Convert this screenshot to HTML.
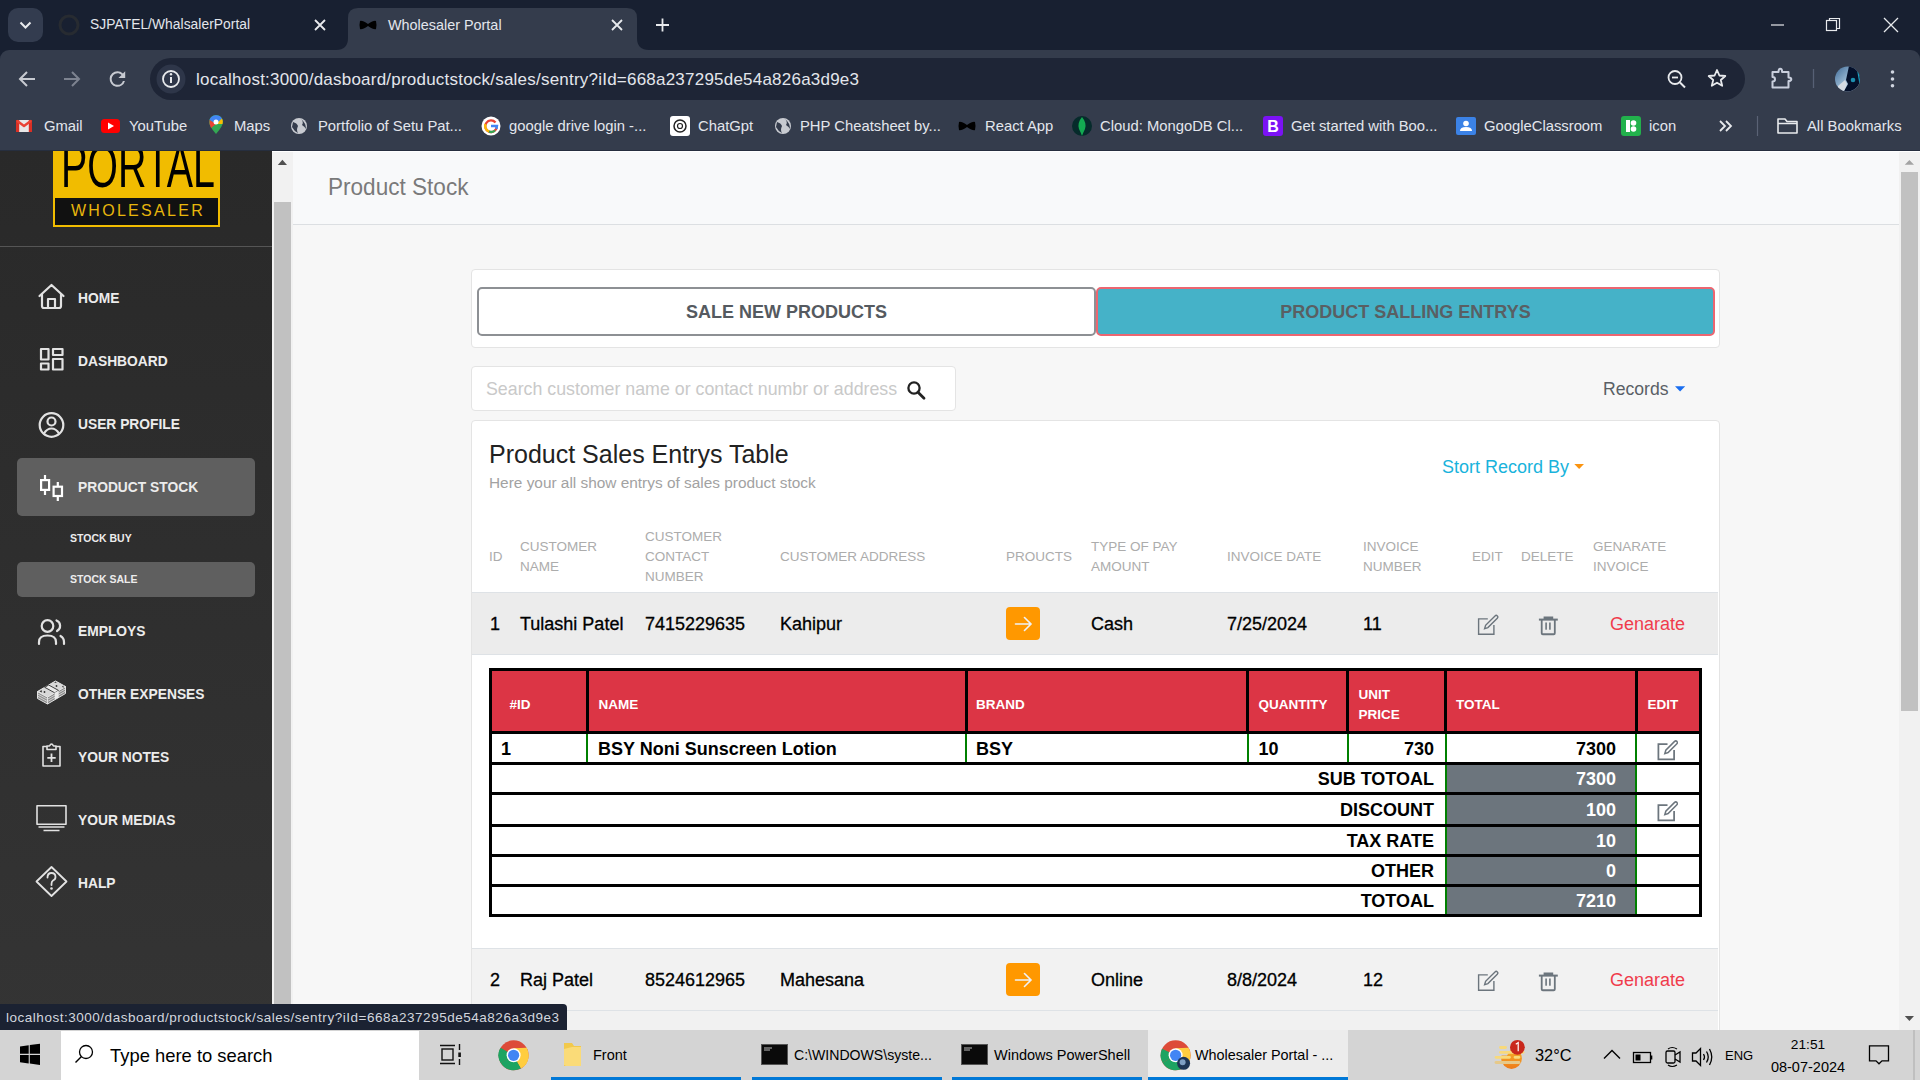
<!DOCTYPE html>
<html><head><meta charset="utf-8">
<style>
*{box-sizing:border-box;margin:0;padding:0}
html,body{width:1920px;height:1080px;overflow:hidden;font-family:"Liberation Sans",sans-serif;background:#f7f7f7}
.abs{position:absolute}
#tabs{position:absolute;left:0;top:0;width:1920px;height:50px;background:#182031}
#toolbar{position:absolute;left:0;top:50px;width:1920px;height:100px;background:#343c4c;border-top-left-radius:9px;border-top-right-radius:9px}
#tabs2{position:absolute;left:0;top:50px;width:1920px;height:12px;background:#182031}
#page{position:absolute;left:0;top:150px;width:1920px;height:880px;background:#f7f7f7;overflow:hidden}
#taskbar{position:absolute;left:0;top:1030px;width:1920px;height:50px;background:#d4d4d4}
.ct{color:#e3e6ec;font-size:15px;white-space:nowrap}
.bm{position:absolute;top:117px;color:#e3e6ec;font-size:14.8px;white-space:nowrap;line-height:18px}
#sidebar{position:absolute;left:0;top:0;width:272px;height:880px;background:linear-gradient(#292929,#343434)}
.nav{position:absolute;margin-top:1px;left:78px;color:#ececec;font-weight:bold;font-size:13.8px;white-space:nowrap;line-height:16px}
.sub{position:absolute;margin-top:1px;left:70px;color:#ececec;font-weight:bold;font-size:10.5px;white-space:nowrap;line-height:13px}
.ico{position:absolute}
.th{position:absolute;color:#acacac;font-size:13.5px;line-height:20px;white-space:nowrap}
.tk{position:absolute;top:15px;color:#000;font-size:16px;line-height:20px;white-space:nowrap}
.td{position:absolute;color:#000;font-size:18px;line-height:20px;white-space:nowrap;-webkit-text-stroke:0.3px #000}
</style></head><body>

<div id="tabs">
  <svg class="abs" style="left:0;top:0" width="1920" height="50">
    <rect x="8" y="8" width="35" height="34" rx="10" fill="#333c4f"/>
    <path d="M20.5 22.5 L25.5 27.5 L30.5 22.5" stroke="#e8eaed" stroke-width="2" fill="none"/>
    <!-- github icon faint -->
    <circle cx="69" cy="25" r="9" fill="none" stroke="#272b31" stroke-width="3"/>
    <!-- active tab shape -->
    <path d="M336 50 Q348 50 348 38 L348 18 Q348 8 358 8 L627 8 Q637 8 637 18 L637 38 Q637 50 649 50 Z" fill="#343c4c"/>
    <!-- close x tab1 -->
    <path d="M315 20 L325 30 M325 20 L315 30" stroke="#e8eaed" stroke-width="1.8"/>
    <!-- close x tab2 -->
    <path d="M612 20 L622 30 M622 20 L612 30" stroke="#e8eaed" stroke-width="1.8"/>
    <!-- plus -->
    <path d="M662.5 18.5 L662.5 31.5 M656 25 L669 25" stroke="#e8eaed" stroke-width="1.8"/>
    <!-- bow tie -->
    <path d="M360 21 Q362 20 368 24 Q374 20 376 21 Q377 25 376 29 Q374 30 368 26 Q362 30 360 29 Q359 25 360 21 Z" fill="#000"/>
    <!-- window controls -->
    <path d="M1771 25 L1784 25" stroke="#e8eaed" stroke-width="1.2"/>
    <rect x="1826.5" y="20.5" width="10" height="10" fill="none" stroke="#e8eaed" stroke-width="1.2"/>
    <path d="M1829.5 20.5 L1829.5 18.5 L1839.5 18.5 L1839.5 28.5 L1836.5 28.5" fill="none" stroke="#e8eaed" stroke-width="1.2"/>
    <path d="M1884 18 L1898 32 M1898 18 L1884 32" stroke="#e8eaed" stroke-width="1.3"/>
  </svg>
  <div class="abs ct" style="left:90px;top:16px;line-height:18px;font-size:13.8px;letter-spacing:0.05px">SJPATEL/WhalsalerPortal</div>
  <div class="abs ct" style="left:388px;top:16px;line-height:18px;font-size:14.4px">Wholesaler Portal</div>
</div>
<div id="tabs2"></div>
<div id="toolbar">
  <svg class="abs" style="left:0;top:0" width="1920" height="100">
    <!-- back -->
    <path d="M35 29 L20 29 M27 22 L20 29 L27 36" stroke="#c7cad1" stroke-width="2" fill="none"/>
    <!-- fwd -->
    <path d="M64 29 L79 29 M72 22 L79 29 L72 36" stroke="#7d8390" stroke-width="2" fill="none"/>
    <!-- reload -->
    <path transform="translate(105.8,17.4) scale(0.97)" d="M17.65 6.35A7.958 7.958 0 0 0 12 4a8 8 0 1 0 7.73 10h-2.08A5.99 5.99 0 0 1 12 18a6 6 0 1 1 0-12c1.66 0 3.140.69 4.220 1.78L13 11h7V4l-2.35 2.35z" fill="#c7cad1"/>
    <!-- address bar -->
    <rect x="150" y="8" width="1595" height="42" rx="21" fill="#1e2536"/>
    <circle cx="171" cy="29" r="14.5" fill="#2e3649"/>
    <circle cx="171" cy="29" r="8" fill="none" stroke="#e8eaed" stroke-width="1.8"/>
    <path d="M171 27 L171 33" stroke="#e8eaed" stroke-width="2"/>
    <circle cx="171" cy="24.3" r="1.2" fill="#e8eaed"/>
    <!-- zoom -->
    <circle cx="1675" cy="27.5" r="6.5" fill="none" stroke="#e8eaed" stroke-width="1.8"/>
    <path d="M1672 27.5 L1678 27.5" stroke="#e8eaed" stroke-width="1.8"/>
    <path d="M1680 32.5 L1685 37.5" stroke="#e8eaed" stroke-width="2"/>
    <!-- star -->
    <path d="M1717 20 L1719.4 25.5 L1725.3 26 L1720.8 30 L1722.2 35.8 L1717 32.7 L1711.8 35.8 L1713.2 30 L1708.7 26 L1714.6 25.5 Z" fill="none" stroke="#e8eaed" stroke-width="1.8" stroke-linejoin="round"/>
    <!-- extensions puzzle -->
    <path d="M1772.5 22 L1778.5 22 Q1778.5 18.8 1780.3 18.8 Q1782.1 18.8 1782.1 22 L1788.5 22 L1788.5 27.5 Q1791.3 27.5 1791.3 29.3 Q1791.3 31.1 1788.5 31.1 L1788.5 37.5 L1772.5 37.5 L1772.5 31.5 Q1775 31.5 1775 29.3 Q1775 27.1 1772.5 27.1 Z" fill="none" stroke="#c9cfdd" stroke-width="2" stroke-linejoin="round"/>
    <path d="M1813.5 19 L1813.5 38" stroke="#566075" stroke-width="1.3"/>
    <!-- avatar -->
    <defs><clipPath id="avc"><circle cx="1847.5" cy="29" r="12.5"/></clipPath>
    <linearGradient id="avg" x1="0" y1="0" x2="1" y2="1"><stop offset="0" stop-color="#3e6a96"/><stop offset="0.6" stop-color="#a9c6de"/><stop offset="1" stop-color="#e0e6ee"/></linearGradient></defs>
    <g clip-path="url(#avc)">
      <rect x="1835" y="16" width="25" height="26" fill="url(#avg)"/>
      <path d="M1849 16 L1861 16 L1861 42 L1843.5 42 L1848 34 L1846 30 Z" fill="#04102a"/>
      <circle cx="1853" cy="30" r="2.3" fill="#1d8fb0"/>
      <path d="M1858 22 L1860 34" stroke="#1aa0c0" stroke-width="1.2"/>
      <path d="M1838 36 L1845 30 L1847 34 L1843.5 42 L1838 42 Z" fill="#d5dbe3"/>
    </g>
    <!-- menu dots -->
    <circle cx="1892.5" cy="22" r="1.8" fill="#d0d5e0"/>
    <circle cx="1892.5" cy="29" r="1.8" fill="#d0d5e0"/>
    <circle cx="1892.5" cy="35.8" r="1.8" fill="#d0d5e0"/>
    <!-- bookmarks icons -->
    <!-- gmail -->
    <rect x="16" y="70" width="16" height="12" rx="1" fill="#e8e8e8"/>
    <rect x="16" y="70" width="3.2" height="12" fill="#d93025"/>
    <rect x="28.8" y="70" width="3.2" height="12" fill="#d93025"/>
    <path d="M17 70.8 L24 76 L31 70.8" fill="none" stroke="#ea4335" stroke-width="2.4" stroke-linejoin="round"/>
    <!-- youtube -->
    <rect x="101" y="69" width="19" height="14" rx="3.5" fill="#ff0000"/>
    <path d="M108 72.5 L114 76 L108 79.5 Z" fill="#fff"/>
    <!-- maps -->
    <path d="M216 84 Q209 76 209 72 A7 7 0 0 1 223 72 Q223 76 216 84 Z" fill="#34a853"/>
    <path d="M209.5 70 A7 7 0 0 1 222 68.5 L216 74 Z" fill="#4285f4"/>
    <path d="M209.5 70 L216 74 L211 78 Q209 74 209.5 70Z" fill="#ea4335"/>
    <path d="M222 68.5 Q223.5 71 222.5 74 L216 74Z" fill="#fbbc04"/>
    <circle cx="216" cy="72" r="2.5" fill="#fff"/>
    <!-- globe portfolio -->
    <circle cx="299" cy="76" r="8" fill="#c8cbd1"/>
    <path d="M293 72 Q297 73 298 76 Q296 80 298 83 Q294 81 292 77Z M301 69 Q304 72 302 75 Q305 77 306 79 Q306 73 301 69Z" fill="#343c4c"/>
    <!-- google G -->
    <circle cx="491" cy="76" r="9.5" fill="#fff"/>
    <path d="M495.5 72.5 A5.8 5.8 0 1 0 496.8 77" fill="none" stroke="#ea4335" stroke-width="2.3"/>
    <path d="M485.5 74 A5.8 5.8 0 0 0 489 81.5" fill="none" stroke="#fbbc04" stroke-width="2.3"/>
    <path d="M489 81.5 A5.8 5.8 0 0 0 495 80.5" fill="none" stroke="#34a853" stroke-width="2.3"/>
    <path d="M491 76 L497 76 L496.5 79" fill="none" stroke="#4285f4" stroke-width="2.3"/>
    <!-- chatgpt -->
    <rect x="670" y="66" width="20" height="20" rx="3" fill="#fff"/>
    <circle cx="680" cy="76" r="6" fill="none" stroke="#222" stroke-width="1.5"/>
    <circle cx="680" cy="76" r="2.5" fill="none" stroke="#222" stroke-width="1.2"/>
    <!-- php globe -->
    <circle cx="783" cy="76" r="8" fill="#c8cbd1"/>
    <path d="M777 72 Q781 73 782 76 Q780 80 782 83 Q778 81 776 77Z M785 69 Q788 72 786 75 Q789 77 790 79 Q790 73 785 69Z" fill="#343c4c"/>
    <!-- react bowtie -->
    <path d="M959 72 Q961 71 967 75 Q973 71 975 72 Q976 76 975 80 Q973 81 967 77 Q961 81 959 80 Q958 76 959 72 Z" fill="#000"/>
    <!-- mongodb -->
    <circle cx="1082" cy="76" r="10" fill="#062b2b"/>
    <path d="M1082 67 Q1087 73 1085 79 Q1083 83 1082 86 Q1081 83 1079 79 Q1077 73 1082 67Z" fill="#13aa52"/>
    <!-- bootstrap -->
    <rect x="1263" y="66" width="20" height="20" rx="3" fill="#7b12f5"/>
    <text x="1273" y="82" font-family="Liberation Sans" font-weight="bold" font-size="16" fill="#fff" text-anchor="middle">B</text>
    <!-- classroom -->
    <rect x="1456" y="67" width="20" height="18" rx="2" fill="#3b82e6"/>
    <circle cx="1466" cy="73.5" r="2.8" fill="#fff"/>
    <path d="M1460 81 Q1460 77 1466 77 Q1472 77 1472 81 Z" fill="#fff"/>
    <!-- icon green -->
    <rect x="1621" y="66" width="20" height="20" rx="3" fill="#22b14c"/>
    <rect x="1626" y="70" width="4" height="12" fill="#fff"/>
    <circle cx="1633.5" cy="73" r="2.8" fill="#fff"/>
    <circle cx="1633.5" cy="79" r="2.8" fill="#fff"/>
    <!-- chevrons -->
    <path d="M1720 71 L1725 76 L1720 81 M1726 71 L1731 76 L1726 81" stroke="#e8eaed" stroke-width="1.8" fill="none"/>
    <path d="M1757.5 66 L1757.5 86" stroke="#5a6275" stroke-width="1.2"/>
    <!-- folder -->
    <path d="M1778 69 L1785 69 L1787 71.5 L1797 71.5 L1797 83 L1778 83 Z M1778 73.5 L1797 73.5" fill="none" stroke="#e8eaed" stroke-width="1.6" stroke-linejoin="round"/>
  </svg>
  <div class="abs ct" style="left:196px;top:20px;font-size:17px;line-height:20px;letter-spacing:0.22px">localhost:3000/dasboard/productstock/sales/sentry?iId=668a237295de54a826a3d9e3</div>
</div>
<div class="bm" style="left:44px">Gmail</div>
<div class="bm" style="left:129px">YouTube</div>
<div class="bm" style="left:234px">Maps</div>
<div class="bm" style="left:318px">Portfolio of Setu Pat...</div>
<div class="bm" style="left:509px">google drive login -...</div>
<div class="bm" style="left:698px">ChatGpt</div>
<div class="bm" style="left:800px">PHP Cheatsheet by...</div>
<div class="bm" style="left:985px">React App</div>
<div class="bm" style="left:1100px">Cloud: MongoDB Cl...</div>
<div class="bm" style="left:1291px">Get started with Boo...</div>
<div class="bm" style="left:1484px">GoogleClassroom</div>
<div class="bm" style="left:1649px">icon</div>
<div class="bm" style="left:1807px">All Bookmarks</div>

<div id="page">
  <div class="abs" style="left:0;top:0;width:1920px;height:1px;background:#262e3e;z-index:5"></div>

  <div id="sidebar">
    <!-- logo -->
    <div class="abs" style="left:53px;top:0;width:167px;height:77px;background:#f1bc00"></div>
    <div class="abs" style="left:54px;top:48px;width:165px;height:28px;background:#111;border:0"></div>
    <div class="abs" style="left:53px;top:47px;width:167px;height:30px;border:2px solid #f1bc00;border-top:1px solid #f1bc00"></div>
    <svg class="abs" style="left:53px;top:0" width="167" height="48">
      <text x="8" y="36.5" font-family="Liberation Sans" font-size="62" fill="#000" textLength="154" lengthAdjust="spacingAndGlyphs">PORTAL</text>
    </svg>
    <div class="abs" style="left:53px;top:52px;width:167px;text-align:center;color:#e8b60c;font-size:16px;letter-spacing:2.3px;line-height:18px;padding-left:3px">WHOLESALER</div>
    <div class="abs" style="left:0;top:96px;width:272px;height:1px;background:#555555"></div>
    <!-- active boxes -->
    <div class="abs" style="left:17px;top:308px;width:238px;height:58px;background:#5f5f5f;border-radius:5px"></div>
    <div class="abs" style="left:17px;top:412px;width:238px;height:35px;background:#5f5f5f;border-radius:5px"></div>
    <div class="nav" style="top:140px">HOME</div>
    <div class="nav" style="top:203px">DASHBOARD</div>
    <div class="nav" style="top:266px">USER PROFILE</div>
    <div class="nav" style="top:329px">PRODUCT STOCK</div>
    <div class="sub" style="top:381px">STOCK BUY</div>
    <div class="sub" style="top:422px">STOCK SALE</div>
    <div class="nav" style="top:473px">EMPLOYS</div>
    <div class="nav" style="top:536px">OTHER EXPENSES</div>
    <div class="nav" style="top:599px">YOUR NOTES</div>
    <div class="nav" style="top:662px">YOUR MEDIAS</div>
    <div class="nav" style="top:725px">HALP</div>
    <svg class="abs" style="left:0;top:0" width="272" height="880">
      <g fill="none" stroke="#e2e2e2" stroke-width="2.2" stroke-linejoin="round" stroke-linecap="round">
        <!-- home -->
        <path d="M39.5 146 L51.5 135 L63.5 146 M42 144 L42 156 Q42 158 44 158 L59 158 Q61 158 61 156 L61 144 M48 158 L48 149 L55 149 L55 158"/>
        <!-- dashboard -->
        <rect x="41" y="199" width="7.5" height="10.5"/>
        <rect x="41" y="213.5" width="7.5" height="6"/>
        <rect x="53" y="199" width="9.5" height="6"/>
        <rect x="53" y="209" width="9.5" height="10.5"/>
        <!-- user -->
        <circle cx="51.5" cy="275" r="11.8"/>
        <circle cx="51.5" cy="271.5" r="4"/>
        <path d="M44 283.5 Q47 278.5 51.5 278.5 Q56 278.5 59 283.5"/>
        <!-- product stock candles -->
        <g stroke="#fff" stroke-width="2.2" stroke-linecap="butt" stroke-linejoin="miter">
          <path d="M45 325 L45 329 M45 341 L45 345"/>
          <rect x="41.1" y="330.1" width="8" height="9.8"/>
          <path d="M57.8 332 L57.8 336 M57.8 347 L57.8 351"/>
          <rect x="53.6" y="336.7" width="8.4" height="9.3"/>
        </g>
        <!-- employs -->
        <circle cx="47.5" cy="476" r="5.8"/>
        <path d="M56.5 470.5 A5.8 5.8 0 0 1 57 481"/>
        <path d="M39 494 L39 492 Q39 485.5 47.5 485.5 Q56 485.5 56 492 L56 494"/>
        <path d="M60.5 486 Q64 488 64 492 L64 494"/>
        <!-- notes clipboard -->
        <path d="M47 596.5 L43 596.5 L43 616 L60 616 L60 596.5 L56 596.5" stroke-width="1.6" stroke-linecap="butt"/>
        <path d="M47 599.5 L47 596 L49.5 596 Q51.5 592 53.5 596 L56 596 L56 599.5 Z" stroke-width="1.6"/>
        <path d="M51.5 603.5 L51.5 612 M47.3 607.8 L55.7 607.8" stroke-width="1.8" stroke-linecap="butt"/>
        <!-- medias monitor -->
        <rect x="37" y="655.8" width="29" height="18.5" stroke-width="1.6"/>
        <path d="M38.5 677 L64.5 677 M43.5 680.6 L59.5 680.6" stroke-width="1.5" stroke-linecap="butt"/>
        <!-- help diamond -->
        <path d="M51.5 717 L66.5 731.5 L51.5 746 L36.5 731.5 Z" stroke-width="1.8"/>
        <path d="M47.5 727.5 Q47.5 723 51.5 723 Q55.5 723 55.5 727 Q55.5 729.5 53 730.5 Q51.5 731.5 51.5 734 L51.5 735" stroke-width="1.8"/>
      </g>
      <circle cx="51.5" cy="738.5" r="1.3" fill="#e2e2e2"/>
      <!-- money stack -->
      <g>
        <polygon points="37.5,541.5 47.5,547 47.5,554 37.5,548.5" fill="#8f8f8f" stroke="#e2e2e2" stroke-width="1"/>
        <polygon points="47.5,547 65.5,536.5 65.5,543.5 47.5,554" fill="#8a8a8a" stroke="#e2e2e2" stroke-width="1"/>
        <path d="M37.5 543.8 L47.5 549.3 L65.5 538.8 M37.5 546.1 L47.5 551.6 L65.5 541.1" stroke="#dcdcdc" stroke-width="0.9" fill="none"/>
        <polygon points="37.5,541.5 55.5,531 65.5,536.5 47.5,547" fill="#d8d8d8" stroke="#e6e6e6" stroke-width="1"/>
        <polygon points="44.7,537.3 48.66,534.99 58.66,540.49 54.7,542.8" fill="#eaeaea" stroke="#2e2e2e" stroke-width="0.9"/>
        <polygon points="54.7,542.8 58.66,540.49 58.66,547.49 54.7,549.8" fill="#eaeaea"/>
        <circle cx="44.5" cy="542" r="0.9" fill="#333"/>
        <circle cx="56.5" cy="536" r="0.9" fill="#333"/>
        <path d="M39.5 541.5 L41.5 540 L42 542.5 Z M62 536.5 L63.5 535.5 L63.5 538 Z M54 532.5 L56 531.5 L56.5 533 Z" fill="#333"/>
      </g>
    </svg>
  </div>
  <!-- sidebar scrollbar -->
  <div class="abs" style="left:272px;top:0;width:21px;height:880px;background:#f1f1f1"></div>
  <div class="abs" style="left:274px;top:52px;width:17px;height:828px;background:#c1c1c1"></div>
  <svg class="abs" style="left:272px;top:0" width="21" height="30"><path d="M5.8 15 L10.4 9.8 L15 15 Z" fill="#505050"/></svg>
<!--MAIN-->
  <!-- header -->
  <div class="abs" style="left:293px;top:0;width:1606px;height:75px;background:#f8f9fa;border-bottom:1px solid #dcdfe2"></div>
  <div class="abs" style="left:328px;top:23.7px;color:#7a7a7a;font-size:24px;line-height:26px;transform:scaleX(0.94);transform-origin:0 0;white-space:nowrap">Product Stock</div>
  <!-- card 1 -->
  <div class="abs" style="left:471px;top:119px;width:1249px;height:79px;background:#fff;border:1px solid #e4e4e4;border-radius:4px"></div>
  <div class="abs" style="left:477px;top:137px;width:619px;height:49px;background:#fff;border:2px solid #8d9094;border-radius:5px;text-align:center;color:#555a60;font-weight:bold;font-size:18px;line-height:47px">SALE NEW PRODUCTS</div>
  <div class="abs" style="left:1096px;top:137px;width:619px;height:49px;background:#45b2c8;border:2px solid #ec6671;border-radius:5px;text-align:center;color:#595f63;font-weight:bold;font-size:18px;line-height:47px">PRODUCT SALLING ENTRYS</div>
  <!-- search -->
  <div class="abs" style="left:471px;top:216px;width:485px;height:45px;background:#fff;border:1px solid #e4e4e4;border-radius:4px"></div>
  <div class="abs" style="left:486px;top:228px;color:#c9c9c9;font-size:17.8px;line-height:22px">Search customer name or contact numbr or address</div>
  <svg class="abs" style="left:904px;top:228px" width="24" height="24"><circle cx="10" cy="10" r="5.6" fill="none" stroke="#222" stroke-width="2.3"/><path d="M14 14.2 L20 20.2" stroke="#222" stroke-width="2.8" stroke-linecap="round"/></svg>
  <!-- records -->
  <div class="abs" style="left:1603px;top:228px;color:#5a5f66;font-size:17.6px;line-height:22px">Records</div>
  <svg class="abs" style="left:1673px;top:234.5px" width="14" height="10"><path d="M2 1.2 L12.2 1.2 L7.1 6.6 Z" fill="#1a6ef0"/></svg>
  <!-- card 2 -->
  <div class="abs" style="left:471px;top:270px;width:1249px;height:700px;background:#fff;border:1px solid #e4e4e4;border-radius:4px"></div>
  <div class="abs" style="left:489px;top:290px;color:#222;font-size:25px;line-height:28px">Product Sales Entrys Table</div>
  <div class="abs" style="left:489px;top:324px;color:#a2a2a2;font-size:15.4px;line-height:18px">Here your all show entrys of sales product stock</div>
  <div class="abs" style="left:1442px;top:307px;color:#19b3dc;font-size:18px;line-height:20px">Stort Record By</div>
  <svg class="abs" style="left:1572px;top:312px" width="14" height="10"><path d="M2.3 2 L12 2 L7.15 7 Z" fill="#fb9410"/></svg>
  <div class="th" style="left:489px;top:396.5px">ID</div>
<div class="th" style="left:520px;top:386.5px">CUSTOMER<br>NAME</div>
<div class="th" style="left:645px;top:376.5px">CUSTOMER<br>CONTACT<br>NUMBER</div>
<div class="th" style="left:780px;top:396.5px">CUSTOMER ADDRESS</div>
<div class="th" style="left:1006px;top:396.5px">PROUCTS</div>
<div class="th" style="left:1091px;top:386.5px">TYPE OF PAY<br>AMOUNT</div>
<div class="th" style="left:1227px;top:396.5px">INVOICE DATE</div>
<div class="th" style="left:1363px;top:386.5px">INVOICE<br>NUMBER</div>
<div class="th" style="left:1472px;top:396.5px">EDIT</div>
<div class="th" style="left:1521px;top:396.5px">DELETE</div>
<div class="th" style="left:1593px;top:386.5px">GENARATE<br>INVOICE</div>

  <div class="abs" style="left:472px;top:442px;width:1246px;height:63px;background:#ececec;border-top:1px solid #dee2e6;border-bottom:1px solid #dee2e6"></div>
<div class="td" style="left:490px;top:463.5px">1</div>
<div class="td" style="left:520px;top:463.5px">Tulashi Patel</div>
<div class="td" style="left:645px;top:463.5px">7415229635</div>
<div class="td" style="left:780px;top:463.5px">Kahipur</div>
<div class="td" style="left:1091px;top:463.5px">Cash</div>
<div class="td" style="left:1227px;top:463.5px">7/25/2024</div>
<div class="td" style="left:1363px;top:463.5px">11</div>
<svg class="abs" style="left:1006px;top:457.0px" width="34" height="33"><rect x="0" y="0" width="34" height="33" rx="4" fill="#ff9800"/><path d="M9.5 17 L24.5 17 M18.5 10.5 L25 17 L18.5 23.5" stroke="#eef2f7" stroke-width="1.6" fill="none" stroke-linecap="round"/></svg>
<svg class="abs" style="left:1476px;top:464.0px" width="24" height="22"><g fill="none" stroke="#6c757d" stroke-width="1.4"><path d="M11.8 4.9 L2.6 4.9 L2.6 20.2 L17.9 20.2 L17.9 11"/><path d="M8.6 14.6 L9.6 11.3 L19 1.9 Q20.2 0.8 21.3 1.9 Q22.4 3.1 21.3 4.2 L11.9 13.6 Z"/></g></svg>
<svg class="abs" style="left:1537px;top:464.5px" width="22" height="22"><g fill="#6c757d"><rect x="6.6" y="1.5" width="9.6" height="2.5"/><rect x="1.9" y="3.6" width="18.9" height="2"/><path d="M3.8 5 L5.6 5 L5.6 18.3 L16.9 18.3 L16.9 5 L18.7 5 L18.7 18.2 Q18.7 20.2 16.7 20.2 L5.8 20.2 Q3.8 20.2 3.8 18.2 Z"/><rect x="8.3" y="7.5" width="1.6" height="7.2"/><rect x="12.1" y="7.5" width="1.6" height="7.2"/></g></svg>
<div class="abs" style="left:1610px;top:463.5px;color:#f03c4c;font-size:18px;line-height:20px">Genarate</div>

  <div class="abs" style="left:472px;top:861px;width:1246px;height:30px;background:#f1f1f1"></div>
  <div class="abs" style="left:472px;top:798px;width:1246px;height:63px;background:#f2f2f2;border-top:1px solid #dee2e6;border-bottom:1px solid #dee2e6"></div>
<div class="td" style="left:490px;top:819.5px">2</div>
<div class="td" style="left:520px;top:819.5px">Raj Patel</div>
<div class="td" style="left:645px;top:819.5px">8524612965</div>
<div class="td" style="left:780px;top:819.5px">Mahesana</div>
<div class="td" style="left:1091px;top:819.5px">Online</div>
<div class="td" style="left:1227px;top:819.5px">8/8/2024</div>
<div class="td" style="left:1363px;top:819.5px">12</div>
<svg class="abs" style="left:1006px;top:813.0px" width="34" height="33"><rect x="0" y="0" width="34" height="33" rx="4" fill="#ff9800"/><path d="M9.5 17 L24.5 17 M18.5 10.5 L25 17 L18.5 23.5" stroke="#eef2f7" stroke-width="1.6" fill="none" stroke-linecap="round"/></svg>
<svg class="abs" style="left:1476px;top:820.0px" width="24" height="22"><g fill="none" stroke="#6c757d" stroke-width="1.4"><path d="M11.8 4.9 L2.6 4.9 L2.6 20.2 L17.9 20.2 L17.9 11"/><path d="M8.6 14.6 L9.6 11.3 L19 1.9 Q20.2 0.8 21.3 1.9 Q22.4 3.1 21.3 4.2 L11.9 13.6 Z"/></g></svg>
<svg class="abs" style="left:1537px;top:820.5px" width="22" height="22"><g fill="#6c757d"><rect x="6.6" y="1.5" width="9.6" height="2.5"/><rect x="1.9" y="3.6" width="18.9" height="2"/><path d="M3.8 5 L5.6 5 L5.6 18.3 L16.9 18.3 L16.9 5 L18.7 5 L18.7 18.2 Q18.7 20.2 16.7 20.2 L5.8 20.2 Q3.8 20.2 3.8 18.2 Z"/><rect x="8.3" y="7.5" width="1.6" height="7.2"/><rect x="12.1" y="7.5" width="1.6" height="7.2"/></g></svg>
<div class="abs" style="left:1610px;top:819.5px;color:#f03c4c;font-size:18px;line-height:20px">Genarate</div>

  <div class="abs" style="left:489px;top:518px;width:1213px;height:249px;background:#000"></div>
<div class="abs" style="left:492px;top:521px;width:94px;height:60px;background:#dc3545"></div>
<div class="abs" style="left:589px;top:521px;width:376px;height:60px;background:#dc3545"></div>
<div class="abs" style="left:968px;top:521px;width:278px;height:60px;background:#dc3545"></div>
<div class="abs" style="left:1249px;top:521px;width:97px;height:60px;background:#dc3545"></div>
<div class="abs" style="left:1349px;top:521px;width:95px;height:60px;background:#dc3545"></div>
<div class="abs" style="left:1447px;top:521px;width:188px;height:60px;background:#dc3545"></div>
<div class="abs" style="left:1638px;top:521px;width:61px;height:60px;background:#dc3545"></div>
<div class="abs" style="left:509.5px;top:545px;color:#fff;font-weight:bold;font-size:13.5px;line-height:20px;white-space:nowrap">#ID</div>
<div class="abs" style="left:598.5px;top:545px;color:#fff;font-weight:bold;font-size:13.5px;line-height:20px;white-space:nowrap">NAME</div>
<div class="abs" style="left:976px;top:545px;color:#fff;font-weight:bold;font-size:13.5px;line-height:20px;white-space:nowrap">BRAND</div>
<div class="abs" style="left:1258.5px;top:545px;color:#fff;font-weight:bold;font-size:13.5px;line-height:20px;white-space:nowrap">QUANTITY</div>
<div class="abs" style="left:1358.5px;top:535px;color:#fff;font-weight:bold;font-size:13.5px;line-height:20px;white-space:nowrap">UNIT<br>PRICE</div>
<div class="abs" style="left:1456px;top:545px;color:#fff;font-weight:bold;font-size:13.5px;line-height:20px;white-space:nowrap">TOTAL</div>
<div class="abs" style="left:1647.5px;top:545px;color:#fff;font-weight:bold;font-size:13.5px;line-height:20px;white-space:nowrap">EDIT</div>
<div class="abs" style="left:492px;top:584px;width:1207px;height:28px;background:#fff"></div>
<div class="abs" style="left:586px;top:584px;width:2px;height:28px;background:#008000"></div>
<div class="abs" style="left:965px;top:584px;width:2px;height:28px;background:#008000"></div>
<div class="abs" style="left:1247px;top:584px;width:2px;height:28px;background:#008000"></div>
<div class="abs" style="left:1347px;top:584px;width:2px;height:28px;background:#008000"></div>
<div class="abs" style="left:1445px;top:584px;width:2px;height:28px;background:#008000"></div>
<div class="abs" style="left:1635px;top:584px;width:2px;height:28px;background:#008000"></div>
<div class="abs" style="left:501px;top:588.5px;color:#000;font-weight:bold;font-size:18px;line-height:20px;white-space:nowrap">1</div>
<div class="abs" style="left:598px;top:588.5px;color:#000;font-weight:bold;font-size:18px;line-height:20px;white-space:nowrap">BSY Noni Sunscreen Lotion</div>
<div class="abs" style="left:976px;top:588.5px;color:#000;font-weight:bold;font-size:18px;line-height:20px;white-space:nowrap">BSY</div>
<div class="abs" style="left:1258.5px;top:588.5px;color:#000;font-weight:bold;font-size:18px;line-height:20px;white-space:nowrap">10</div>
<div class="abs" style="right:486px;top:588.5px;color:#000;font-weight:bold;font-size:18px;line-height:20px;white-space:nowrap">730</div>
<div class="abs" style="right:304px;top:588.5px;color:#000;font-weight:bold;font-size:18px;line-height:20px;white-space:nowrap">7300</div>
<svg class="abs" style="left:1656px;top:589px" width="22" height="22"><g fill="none" stroke="#6c757d" stroke-width="1.75"><path d="M11.5 5.1 L2.4 5.1 L2.4 20.4 L18.1 20.4 L18.1 11"/><path d="M8.8 14.6 L9.8 11.2 L18.6 2.4 Q19.8 1.3 20.9 2.4 Q22 3.6 20.9 4.7 L12.1 13.5 Z" stroke-width="1.5"/></g></svg>
<div class="abs" style="left:492px;top:615px;width:953px;height:27px;background:#fff"></div>
<div class="abs" style="left:1445px;top:615px;width:2px;height:27px;background:#008000"></div>
<div class="abs" style="left:1447px;top:615px;width:188px;height:27px;background:#6c757d"></div>
<div class="abs" style="left:1635px;top:615px;width:2px;height:27px;background:#008000"></div>
<div class="abs" style="left:1637px;top:615px;width:62px;height:27px;background:#fff"></div>
<div class="abs" style="right:486px;top:618.5px;color:#000;font-weight:bold;font-size:18px;line-height:20px;white-space:nowrap">SUB TOTOAL</div>
<div class="abs" style="right:304px;top:618.5px;color:#fff;font-weight:bold;font-size:18px;line-height:20px;white-space:nowrap">7300</div>
<div class="abs" style="left:492px;top:645px;width:953px;height:29px;background:#fff"></div>
<div class="abs" style="left:1445px;top:645px;width:2px;height:29px;background:#008000"></div>
<div class="abs" style="left:1447px;top:645px;width:188px;height:29px;background:#6c757d"></div>
<div class="abs" style="left:1635px;top:645px;width:2px;height:29px;background:#008000"></div>
<div class="abs" style="left:1637px;top:645px;width:62px;height:29px;background:#fff"></div>
<div class="abs" style="right:486px;top:649.5px;color:#000;font-weight:bold;font-size:18px;line-height:20px;white-space:nowrap">DISCOUNT</div>
<div class="abs" style="right:304px;top:649.5px;color:#fff;font-weight:bold;font-size:18px;line-height:20px;white-space:nowrap">100</div>
<svg class="abs" style="left:1656px;top:649.5px" width="22" height="22"><g fill="none" stroke="#6c757d" stroke-width="1.75"><path d="M11.5 5.1 L2.4 5.1 L2.4 20.4 L18.1 20.4 L18.1 11"/><path d="M8.8 14.6 L9.8 11.2 L18.6 2.4 Q19.8 1.3 20.9 2.4 Q22 3.6 20.9 4.7 L12.1 13.5 Z" stroke-width="1.5"/></g></svg>
<div class="abs" style="left:492px;top:677px;width:953px;height:27px;background:#fff"></div>
<div class="abs" style="left:1445px;top:677px;width:2px;height:27px;background:#008000"></div>
<div class="abs" style="left:1447px;top:677px;width:188px;height:27px;background:#6c757d"></div>
<div class="abs" style="left:1635px;top:677px;width:2px;height:27px;background:#008000"></div>
<div class="abs" style="left:1637px;top:677px;width:62px;height:27px;background:#fff"></div>
<div class="abs" style="right:486px;top:680.5px;color:#000;font-weight:bold;font-size:18px;line-height:20px;white-space:nowrap">TAX RATE</div>
<div class="abs" style="right:304px;top:680.5px;color:#fff;font-weight:bold;font-size:18px;line-height:20px;white-space:nowrap">10</div>
<div class="abs" style="left:492px;top:707px;width:953px;height:27px;background:#fff"></div>
<div class="abs" style="left:1445px;top:707px;width:2px;height:27px;background:#008000"></div>
<div class="abs" style="left:1447px;top:707px;width:188px;height:27px;background:#6c757d"></div>
<div class="abs" style="left:1635px;top:707px;width:2px;height:27px;background:#008000"></div>
<div class="abs" style="left:1637px;top:707px;width:62px;height:27px;background:#fff"></div>
<div class="abs" style="right:486px;top:710.5px;color:#000;font-weight:bold;font-size:18px;line-height:20px;white-space:nowrap">OTHER</div>
<div class="abs" style="right:304px;top:710.5px;color:#fff;font-weight:bold;font-size:18px;line-height:20px;white-space:nowrap">0</div>
<div class="abs" style="left:492px;top:737px;width:953px;height:27px;background:#fff"></div>
<div class="abs" style="left:1445px;top:737px;width:2px;height:27px;background:#008000"></div>
<div class="abs" style="left:1447px;top:737px;width:188px;height:27px;background:#6c757d"></div>
<div class="abs" style="left:1635px;top:737px;width:2px;height:27px;background:#008000"></div>
<div class="abs" style="left:1637px;top:737px;width:62px;height:27px;background:#fff"></div>
<div class="abs" style="right:486px;top:740.5px;color:#000;font-weight:bold;font-size:18px;line-height:20px;white-space:nowrap">TOTOAL</div>
<div class="abs" style="right:304px;top:740.5px;color:#fff;font-weight:bold;font-size:18px;line-height:20px;white-space:nowrap">7210</div>

  <!-- page scrollbar -->
  <div class="abs" style="left:1899px;top:0;width:21px;height:880px;background:#f1f1f1"></div>
  <div class="abs" style="left:1901px;top:22px;width:17px;height:539px;background:#c1c1c1"></div>
  <svg class="abs" style="left:1899px;top:0" width="21" height="880"><path d="M5.8 14.8 L10.4 10 L15 14.8 Z" fill="#a3a3a3"/><path d="M5.8 866 L15 866 L10.4 871 Z" fill="#505050"/></svg>
  <div class="abs" style="left:272px;top:1px;width:1648px;height:1px;background:#fff"></div>
  <!-- status tooltip -->
  <div class="abs" style="left:0;top:854px;width:567px;height:26px;background:#1b2232;border-top-right-radius:4px;color:#d3d7df;font-size:13.5px;letter-spacing:0.52px;line-height:27px;padding-left:6px;white-space:nowrap">localhost:3000/dasboard/productstock/sales/sentry?iId=668a237295de54a826a3d9e3</div>
<!--/MAIN-->
</div>
<div id="taskbar">
  <div class="abs" style="left:61px;top:1px;width:358px;height:49px;background:#fff"></div>
  <div class="abs" style="left:1148px;top:0;width:200px;height:50px;background:#ececec"></div>
  <div class="abs" style="left:551px;top:47px;width:190px;height:3px;background:#0078d7"></div>
  <div class="abs" style="left:752px;top:47px;width:190px;height:3px;background:#0078d7"></div>
  <div class="abs" style="left:952px;top:47px;width:190px;height:3px;background:#0078d7"></div>
  <div class="abs" style="left:1148px;top:47px;width:200px;height:3px;background:#0078d7"></div>
  <svg class="abs" style="left:0;top:0" width="1920" height="50">
    <!-- windows logo -->
    <path d="M20 16.5 L28.7 15.3 L28.7 23.8 L20 23.8 Z M29.8 15.1 L40 13.7 L40 23.8 L29.8 23.8 Z M20 24.9 L28.7 24.9 L28.7 33.4 L20 32.2 Z M29.8 24.9 L40 24.9 L40 35 L29.8 33.6 Z" fill="#000"/>
    <!-- search icon -->
    <circle cx="86" cy="22" r="6.5" fill="none" stroke="#000" stroke-width="1.3"/>
    <path d="M81.5 26.5 L75.5 32.5" stroke="#000" stroke-width="1.4"/>
    <!-- task view -->
    <g fill="none" stroke="#111" stroke-width="1.4">
      <path d="M440 15.5 L455 15.5 M440 33.5 L455 33.5"/>
      <rect x="442" y="19" width="11" height="11"/>
      <path d="M459.5 14 L459.5 20 M459.5 29 L459.5 35"/>
    </g>
    <rect x="458.3" y="22.5" width="2.6" height="4.5" fill="#111"/>
    <!-- chrome icon -->
    <g transform="translate(513.6,25.3)">
      <circle r="15" fill="#dd4b39"/>
      <path d="M0 0 L-13 7.5 A15 15 0 0 1 -13 -7.5 Z" fill="#1da462"/>
      <path d="M0 0 L-13 7.5 A15 15 0 0 0 7.5 13 Z" fill="#1da462"/>
      <path d="M0 0 L7.5 13 A15 15 0 0 0 15 0 L13 -7.5 Z" fill="#ffcd40"/>
      <path d="M0 -7 L13 -7.5 A15 15 0 0 1 15 0 A15 15 0 0 1 7.5 13 L3.5 6 Z" fill="#ffcd40"/>
      <path d="M-6 3.5 L-13 7.5 A15 15 0 0 1 -13.5 -6.5 Z" fill="#1da462"/>
      <circle r="7" fill="#fff"/>
      <circle r="5.6" fill="#4285f4"/>
    </g>
    <!-- folder -->
    <path d="M564 13 L572 13 L574 16 L581 16 L581 36 L564 36 Z" fill="#f2c94c"/>
    <path d="M564 19 L572 17 L581 17 L581 36 L566 36 L564 35 Z" fill="#fadb78"/>
    <!-- cmd icons -->
    <rect x="761" y="14" width="27" height="21" fill="#555"/>
    <rect x="762" y="15" width="25" height="19" fill="#0a0a0a"/>
    <path d="M764 18 L772 18 M764 20 L770 20" stroke="#bbb" stroke-width="1"/>
    <rect x="961" y="14" width="27" height="21" fill="#555"/>
    <rect x="962" y="15" width="25" height="19" fill="#0a0a0a"/>
    <path d="M964 18 L972 18 M964 20 L970 20" stroke="#bbb" stroke-width="1"/>
    <!-- chrome icon 2 -->
    <g transform="translate(1175.6,25.3)">
      <circle r="15" fill="#dd4b39"/>
      <path d="M0 0 L-13 7.5 A15 15 0 0 1 -13.5 -6.5 Z" fill="#1da462"/>
      <path d="M0 0 L-13 7.5 A15 15 0 0 0 7.5 13 Z" fill="#1da462"/>
      <path d="M0 -7 L13 -7.5 A15 15 0 0 1 15 0 A15 15 0 0 1 7.5 13 L3.5 6 Z" fill="#ffcd40"/>
      <circle r="7" fill="#fff"/>
      <circle r="5.6" fill="#4285f4"/>
      <circle cx="8" cy="8" r="6.5" fill="#1e3555"/>
      <circle cx="7" cy="7" r="3" fill="#7f9fc4"/>
    </g>
    <!-- weather -->
    <defs><linearGradient id="sung" x1="0" y1="0" x2="0" y2="1"><stop offset="0" stop-color="#f6b42a"/><stop offset="1" stop-color="#ee7a18"/></linearGradient></defs>
    <circle cx="1511.5" cy="28.5" r="10.4" fill="url(#sung)"/>
    <path d="M1495 5 L1519 5 L1510 21 L1507 25.5 L1495 25.5 Z" fill="#d4d4d4"/>
    <g stroke="#f8d97a" stroke-width="2.8" stroke-linecap="round">
      <path d="M1500.5 17.5 L1505.5 17.5"/>
      <path d="M1500.5 22.3 L1523 22.3"/>
      <path d="M1496 27.3 L1509.5 27.3 M1515 27.3 L1519 27.3"/>
      <path d="M1496 32.5 L1519 32.5" stroke="#e6c98a"/>
    </g>
    <circle cx="1517.4" cy="17.3" r="7.4" fill="#c9281c"/>
    <path d="M1515.8 14.2 L1518.2 12.6 L1518.2 21.3" fill="none" stroke="#fff" stroke-width="1.2"/>
    <!-- chevron up -->
    <path d="M1604 28.5 L1612 20.5 L1620 28.5" fill="none" stroke="#000" stroke-width="1.4"/>
    <!-- battery -->
    <rect x="1633.5" y="22.5" width="17" height="10" fill="none" stroke="#000" stroke-width="1.3"/>
    <rect x="1635.5" y="24.5" width="5" height="6" fill="#000"/>
    <rect x="1650.5" y="25.5" width="1.8" height="4" fill="#000"/>
    <!-- meet -->
    <rect x="1666" y="21" width="9" height="12" rx="1.5" fill="none" stroke="#000" stroke-width="1.3"/>
    <path d="M1675 25 L1680 22 L1680 32 L1675 29" fill="none" stroke="#000" stroke-width="1.3"/>
    <path d="M1668 19 Q1672 16 1677 19 M1668 35 Q1672 38 1677 35" fill="none" stroke="#000" stroke-width="1.1"/>
    <!-- volume -->
    <path d="M1692.5 23 L1696 23 L1700.5 18.5 L1700.5 35.5 L1696 31 L1692.5 31 Z" fill="none" stroke="#000" stroke-width="1.3"/>
    <path d="M1703.5 24 Q1705.5 27 1703.5 30 M1706.5 21.5 Q1710 27 1706.5 32.5 M1709.5 19 Q1714 27 1709.5 35" fill="none" stroke="#000" stroke-width="1.3"/>
    <!-- notification -->
    <path d="M1869.5 15.8 L1888.5 15.8 L1888.5 30.8 L1882 30.8 L1879 33.8 L1876 30.8 L1869.5 30.8 Z" fill="none" stroke="#000" stroke-width="1.3"/>
    <path d="M1914 0 L1914 50" stroke="#aaa" stroke-width="1"/>
  </svg>
  <div class="abs" style="left:110px;top:14px;color:#000;font-size:18.4px;line-height:24px;white-space:nowrap">Type here to search</div>
  <div class="abs tk" style="left:593px;font-size:14.5px">Front</div>
  <div class="abs tk" style="left:794px;font-size:14.1px">C:\WINDOWS\syste...</div>
  <div class="abs tk" style="left:994px;font-size:14.5px">Windows PowerShell</div>
  <div class="abs tk" style="left:1195px;font-size:14.4px">Wholesaler Portal - ...</div>
  <div class="abs tk" style="left:1535px;font-size:16.4px">32°C</div>
  <div class="abs tk" style="left:1725px;top:16px;font-size:13px">ENG</div>
  <div class="abs tk" style="left:1770px;top:4.5px;width:76px;text-align:center;font-size:13.7px">21:51</div>
  <div class="abs tk" style="left:1768px;top:26.5px;width:80px;text-align:center;font-size:14.5px">08-07-2024</div>
</div>
</body></html>
